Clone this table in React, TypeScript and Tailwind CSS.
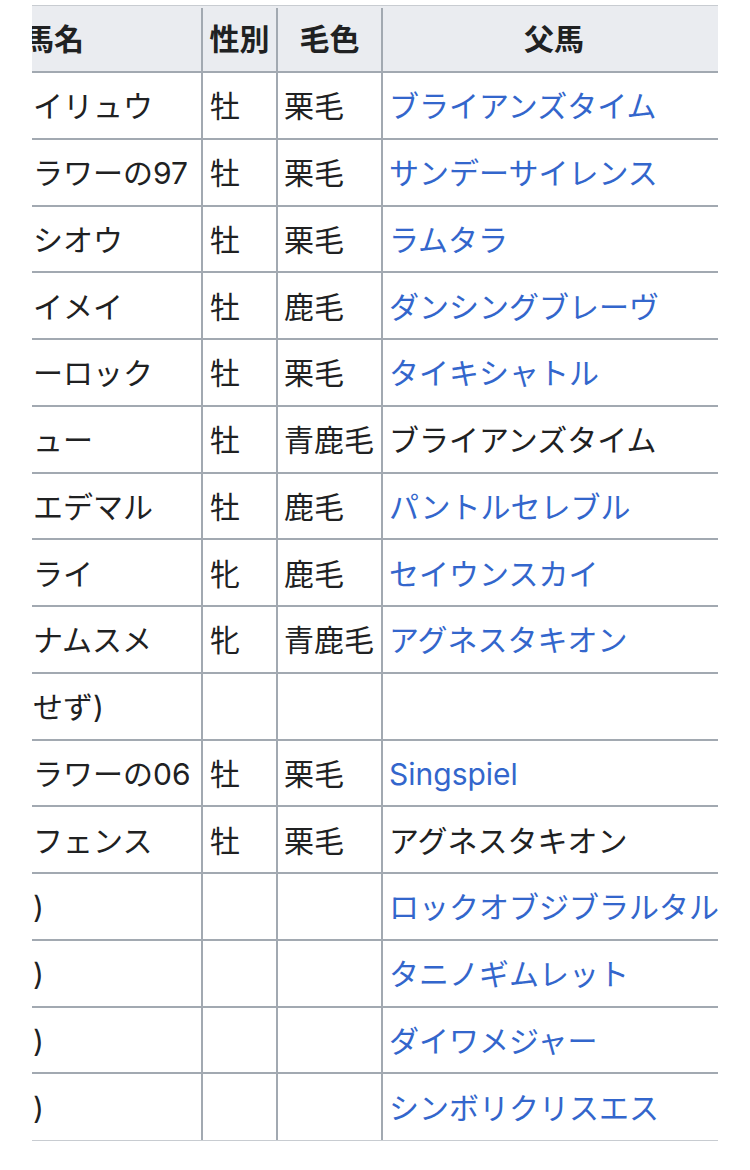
import React from "react";

type Row = {
  name: string;
  sex: string;
  coat: string;
  sire: string;
  link: boolean;
};

const rows: Row[] = [
  { name: "イリュウ", sex: "牡", coat: "栗毛", sire: "ブライアンズタイム", link: true },
  { name: "ラワーの97", sex: "牡", coat: "栗毛", sire: "サンデーサイレンス", link: true },
  { name: "シオウ", sex: "牡", coat: "栗毛", sire: "ラムタラ", link: true },
  { name: "イメイ", sex: "牡", coat: "鹿毛", sire: "ダンシングブレーヴ", link: true },
  { name: "ーロック", sex: "牡", coat: "栗毛", sire: "タイキシャトル", link: true },
  { name: "ュー", sex: "牡", coat: "青鹿毛", sire: "ブライアンズタイム", link: false },
  { name: "エデマル", sex: "牡", coat: "鹿毛", sire: "パントルセレブル", link: true },
  { name: "ライ", sex: "牝", coat: "鹿毛", sire: "セイウンスカイ", link: true },
  { name: "ナムスメ", sex: "牝", coat: "青鹿毛", sire: "アグネスタキオン", link: true },
  { name: "せず)", sex: "", coat: "", sire: "", link: false },
  { name: "ラワーの06", sex: "牡", coat: "栗毛", sire: "Singspiel", link: true },
  { name: "フェンス", sex: "牡", coat: "栗毛", sire: "アグネスタキオン", link: false },
  { name: ")", sex: "", coat: "", sire: "ロックオブジブラルタル", link: true },
  { name: ")", sex: "", coat: "", sire: "タニノギムレット", link: true },
  { name: ")", sex: "", coat: "", sire: "ダイワメジャー", link: true },
  { name: ")", sex: "", coat: "", sire: "シンボリクリスエス", link: true },
];

const cols = "grid grid-cols-[296px_75px_105px_342px]";

export default function App() {
  return (
    <div className="min-h-[1170px] bg-white pt-[5px] font-[Inter,'Noto_Sans_CJK_JP',sans-serif] text-[30px] text-[#202122]">
      {/* table is scrolled sideways inside its wrapper, so the first column is cut off */}
      <div className="ml-[32px] w-[686px] overflow-hidden border-t border-[#c8ccd1]">
        <div className="-ml-[125px] w-[818px]">
          {/* header */}
          <div className={`${cols} h-[67px] border-b-2 border-[#a2a9b1] bg-[#eaecf0] pt-[2px] font-bold`}>
            <div className="flex items-center justify-center border-r-2 border-[#a2a9b1]">馬名</div>
            <div className="flex items-center justify-center border-r-2 border-[#a2a9b1]">性別</div>
            <div className="flex items-center justify-center border-r-2 border-[#a2a9b1]">毛色</div>
            <div className="flex items-center justify-center">父馬</div>
          </div>

          {rows.map((r, i) => (
            <div
              key={i}
              className={`${cols} h-[66.75px] ${
                i === rows.length - 1 ? "border-b border-[#c8ccd1]" : "border-b-2 border-[#a2a9b1]"
              }`}
            >
              <div className="flex items-center whitespace-nowrap border-r-2 border-[#a2a9b1] pt-[3px] pl-[126px]">
                {r.name}
              </div>
              <div className="flex items-center border-r-2 border-[#a2a9b1] pt-[3px] pl-[7px]">{r.sex}</div>
              <div className="flex items-center whitespace-nowrap border-r-2 border-[#a2a9b1] pt-[3px] pl-[6px]">
                {r.coat}
              </div>
              <div className="flex items-center whitespace-nowrap pt-[3px] pl-[6px]">
                {r.link ? <a className="text-[#3366cc]">{r.sire}</a> : r.sire}
              </div>
            </div>
          ))}
        </div>
      </div>
    </div>
  );
}
